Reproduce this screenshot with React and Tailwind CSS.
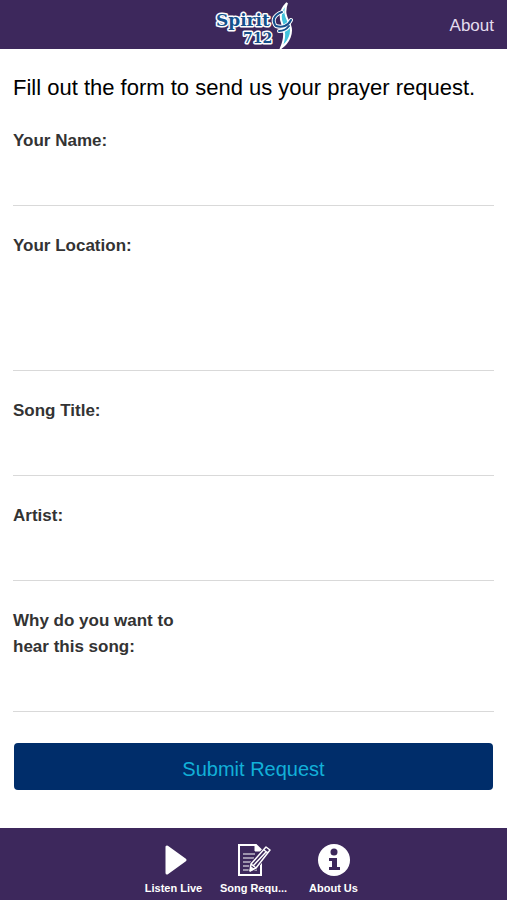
const fields = [
  { id: 'name', label: 'Your Name:' },
  { id: 'location', label: 'Your Location:', multiline: true },
  { id: 'title', label: 'Song Title:' },
  { id: 'artist', label: 'Artist:' },
  { id: 'reason', label: 'Why do you want to hear this song:' },
];

function Logo() {
  return (
    <svg viewBox="0 0 80 48" className="w-20 h-12" role="img" aria-label="Spirit 712">
      <g
        fontFamily="'DejaVu Serif', serif"
        fontWeight="700"
        fill="#15518c"
        stroke="#ffffff"
        strokeWidth="3"
        strokeLinejoin="round"
        paintOrder="stroke"
      >
        <text x="3" y="25" fontSize="17">Spirit</text>
        <text x="30" y="42" fontSize="14">712</text>
      </g>
      <path
        d="M74 2c-6 6-8 12-5 20 2 7 4 13-1 25 8-6 12-15 9-23-3-7-7-11-3-22z"
        fill="#43c4dc"
        stroke="#ffffff"
        strokeWidth="2"
      />
      <path
        d="M69 11c-8 3-10 8-7 13M63 25c6 2 12 0 15-6M66 30c4 0 7-1 10-5"
        fill="none"
        stroke="#ffffff"
        strokeWidth="4"
        strokeLinecap="round"
      />
      <path
        d="M69 11c-8 3-10 8-7 13M63 25c6 2 12 0 15-6M66 30c4 0 7-1 10-5"
        fill="none"
        stroke="#15518c"
        strokeWidth="2"
        strokeLinecap="round"
      />
    </svg>
  );
}

function PlayIcon() {
  return (
    <svg viewBox="0 0 34 34" className="size-[34px]" aria-hidden="true">
      <path
        d="M10 4v26L28 17z"
        fill="currentColor"
        stroke="currentColor"
        strokeWidth="3"
        strokeLinejoin="round"
      />
    </svg>
  );
}

function NoteIcon() {
  return (
    <svg viewBox="0 0 34 34" className="size-[34px]" fill="none" stroke="currentColor" aria-hidden="true">
      <path d="M24 10V7l-5-5H2v30h22V20" strokeWidth="2" />
      <path d="M18 2v6h6z" fill="currentColor" strokeWidth="1" />
      <path d="M6 11h12M6 15h11M6 19h8M6 23h7M6 27h14" strokeWidth="1" />
      <path d="M29 4l4 3-14 18-6 3 1-7z" fill="#3d285c" stroke="#3d285c" strokeWidth="3" />
      <path d="M29 4l4 3-14 18-6 3 1-7zM27 7l4 3M14 21l5 4M29 9L16 23" strokeWidth="1.5" strokeLinejoin="round" />
      <path d="M13 28l1-4 3 2z" fill="currentColor" />
    </svg>
  );
}

function InfoIcon() {
  return (
    <svg viewBox="0 0 34 34" className="size-[34px]" aria-hidden="true">
      <circle cx="17" cy="17" r="16" fill="currentColor" />
      <circle cx="17" cy="9" r="3.5" fill="#3d285c" />
      <path d="M12 15h8v9h3v3H12v-3h3v-6h-3z" fill="#3d285c" />
    </svg>
  );
}

const tabs = [
  { label: 'Listen Live', icon: PlayIcon },
  { label: 'Song Requ...', icon: NoteIcon },
  { label: 'About Us', icon: InfoIcon },
];

function Field({ id, label, multiline }) {
  const line = 'block w-full border-b border-[#d9d9d9] bg-transparent text-[17px] outline-none resize-none';
  return (
    <div>
      <label htmlFor={id} className="block max-w-[180px] text-[17px] leading-[26px] font-bold text-[#333333]">
        {label}
      </label>
      {multiline ? (
        <textarea id={id} name={id} className={`${line} h-28`} />
      ) : (
        <input id={id} name={id} type="text" className={`${line} h-[52px]`} />
      )}
    </div>
  );
}

export default function App() {
  return (
    <div className="flex min-h-screen flex-col bg-white font-['Liberation_Sans',Arial,sans-serif]">
      <header className="grid h-[49px] grid-cols-3 items-center bg-[#3d285c] px-[13px]">
        <a href="#home" className="col-start-2 justify-self-center">
          <Logo />
        </a>
        <a href="#about" className="justify-self-end pt-0.5 text-[17px] text-[#e4dcee]">About</a>
      </header>

      <main className="flex-1 px-[13px] pt-[25px]">
        <h1 className="text-[22px] leading-7 text-black">Fill out the form to send us your prayer request.</h1>
        <form className="pt-[26px]" onSubmit={(e) => e.preventDefault()}>
          <div className="flex flex-col gap-[27px]">
            {fields.map((field) => (
              <Field key={field.id} {...field} />
            ))}
          </div>
          <div className="px-px pt-[31px] pb-8">
            <button
              type="submit"
              className="block h-[47px] w-full rounded bg-[#002d6a] pt-1 text-xl text-[#12b0d8]"
            >
              Submit Request
            </button>
          </div>
        </form>
      </main>

      <nav className="flex h-[72px] justify-center bg-[#3d285c] pt-[15px] text-white">
        {tabs.map(({ label, icon: Icon }) => (
          <a key={label} href="#tab" className="flex w-20 flex-col items-center gap-1 text-[11px] leading-[14px] font-bold">
            <Icon />
            {label}
          </a>
        ))}
      </nav>
    </div>
  );
}
